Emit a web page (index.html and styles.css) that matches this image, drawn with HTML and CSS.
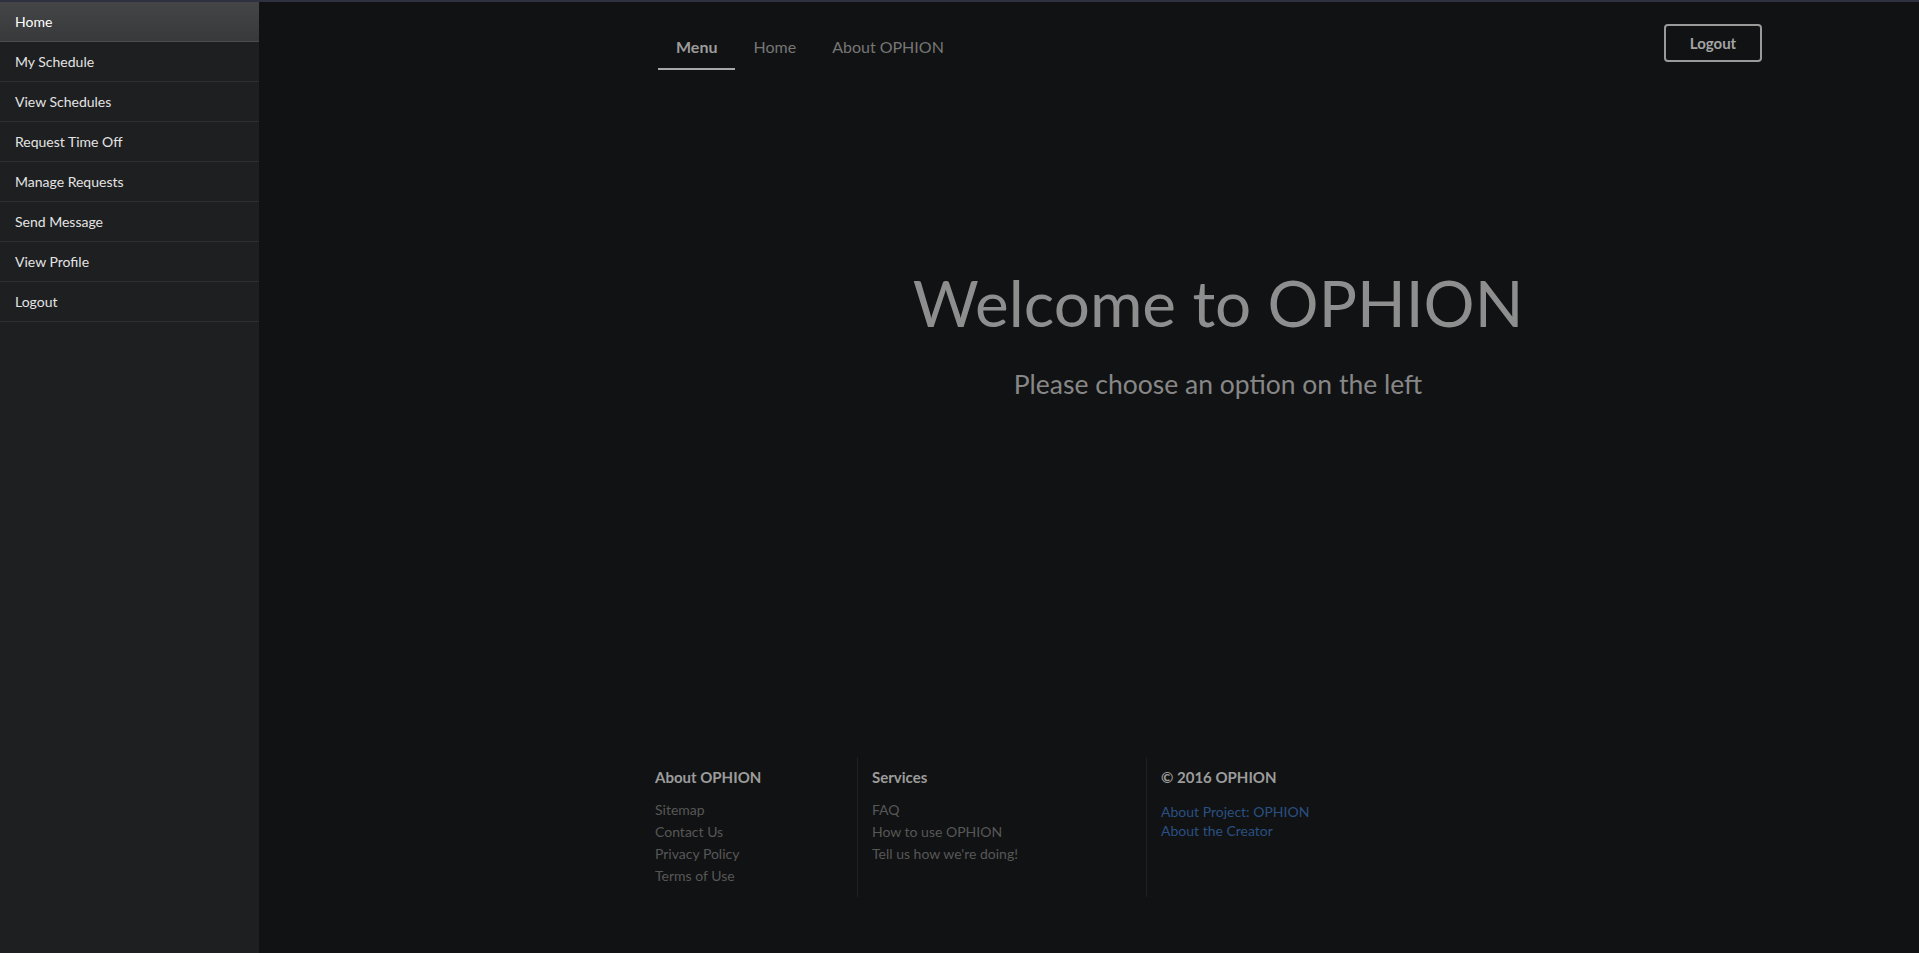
FILE: index.html
```html
<!DOCTYPE html>
<html lang="en">
<head>
<meta charset="utf-8">
<title>OPHION</title>
<link rel="stylesheet" href="styles.css">
</head>
<body>
<div class="page">
  <aside class="sidebar">
    <ul class="side-nav">
      <li class="active"><a href="#">Home</a></li>
      <li><a href="#">My Schedule</a></li>
      <li><a href="#">View Schedules</a></li>
      <li><a href="#">Request Time Off</a></li>
      <li><a href="#">Manage Requests</a></li>
      <li><a href="#">Send Message</a></li>
      <li><a href="#">View Profile</a></li>
      <li><a href="#">Logout</a></li>
    </ul>
  </aside>
  <main class="main">
    <div class="content">
      <header class="topbar">
        <ul class="tabs">
          <li class="tab active"><a href="#">Menu</a></li>
          <li class="tab"><a href="#">Home</a></li>
          <li class="tab"><a href="#">About OPHION</a></li>
        </ul>
        <a class="btn-logout" href="#">Logout</a>
      </header>
      <section class="hero">
        <h1>Welcome to OPHION</h1>
        <p>Please choose an option on the left</p>
      </section>
      <footer class="footer">
        <div class="fcol fcol-1">
          <h4>About OPHION</h4>
          <ul>
            <li><a href="#">Sitemap</a></li>
            <li><a href="#">Contact Us</a></li>
            <li><a href="#">Privacy Policy</a></li>
            <li><a href="#">Terms of Use</a></li>
          </ul>
        </div>
        <div class="fcol fcol-2">
          <h4>Services</h4>
          <ul>
            <li><a href="#">FAQ</a></li>
            <li><a href="#">How to use OPHION</a></li>
            <li><a href="#">Tell us how we're doing!</a></li>
          </ul>
        </div>
        <div class="fcol fcol-3">
          <h4>&copy; 2016 OPHION</h4>
          <ul class="blue">
            <li><a href="#">About Project: OPHION</a></li>
            <li><a href="#">About the Creator</a></li>
          </ul>
        </div>
      </footer>
    </div>
  </main>
</div>
</body>
</html>
```
FILE: styles.css
```css
* { box-sizing: border-box; }
html, body {
  margin: 0;
  padding: 0;
  height: 100%;
  background: #111213;
  font-family: Lato, "Open Sans", "Liberation Sans", sans-serif;
}
a { text-decoration: none; }
ul { list-style: none; margin: 0; padding: 0; }

.page {
  display: flex;
  min-height: 953px;
  border-top: 2px solid #2d3140;
}

.sidebar {
  width: 259px;
  flex: 0 0 259px;
  background: #1e1f21;
}
.side-nav li {
  height: 40px;
  border-bottom: 1px solid #2e2f31;
}
.side-nav li a {
  display: block;
  height: 39px;
  line-height: 40px;
  padding-left: 15px;
  font-size: 14px;
  color: #e4e4e4;
}
.side-nav li.active {
  background: linear-gradient(#444547, #38393b);
  border-bottom-color: #4c4d4f;
}
.side-nav li.active a { color: #ffffff; line-height: 39px; }

.main {
  flex: 1;
}
.content {
  margin-left: 381px;
  width: 1136px;
}

.topbar {
  display: flex;
  justify-content: space-between;
  align-items: flex-start;
  padding: 0 14px 0 18px;
}
.tabs { display: flex; }
.tab a {
  display: block;
  padding: 34px 18px 10px;
  font-size: 16px;
  line-height: 22px;
  color: #767676;
  border-bottom: 2px solid transparent;
}
.tab.active a {
  color: #9c9c9c;
  font-weight: 700;
  border-bottom-color: #a8a8a8;
}
.btn-logout {
  margin-top: 22px;
  display: block;
  width: 98px;
  height: 38px;
  border: 2px solid #9a9a9a;
  border-radius: 4px;
  text-align: center;
  font-size: 15px;
  font-weight: 700;
  line-height: 35px;
  color: #a4a4a4;
}

.hero {
  width: 1156px;
  text-align: center;
  margin-top: 195px;
}
.hero h1 {
  margin: 0;
  font-size: 63.8px;
  font-weight: 400;
  line-height: 1.2;
  color: #8e8e8e;
}
.hero p {
  margin: 27px 0 0;
  font-size: 26.5px;
  line-height: 1.2;
  color: #878787;
}

.footer {
  display: flex;
  margin-top: 357px;
}
.fcol {
  padding: 11px 14px 10px;
}
.fcol-1 { width: 217px; padding-left: 15px; }
.fcol-2 { width: 289px; border-left: 1px solid #1f2022; }
.fcol-3 { width: 300px; border-left: 1px solid #1f2022; }
.fcol h4 {
  margin: 0 0 13px;
  font-size: 15px;
  font-weight: 700;
  line-height: 18px;
  color: #9c9c9c;
}
.fcol li a {
  display: block;
  font-size: 14px;
  line-height: 22px;
  color: #575757;
}
.fcol-3 h4 { margin-bottom: 16px; }
.fcol ul.blue li a {
  line-height: 19px;
  color: #2a5082;
}
```
